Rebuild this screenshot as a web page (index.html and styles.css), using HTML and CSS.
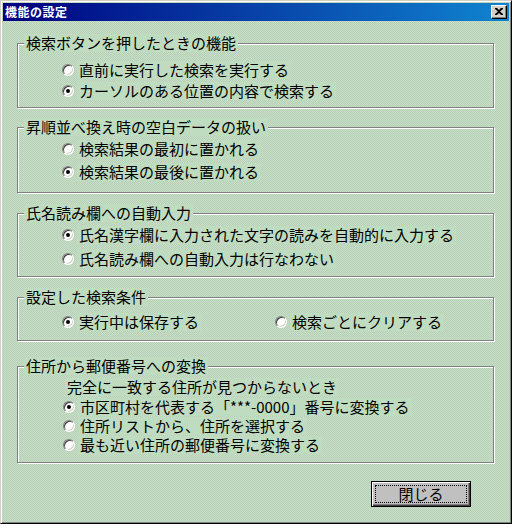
FILE: index.html
```html
<!DOCTYPE html>
<html lang="ja">

<head>
    <meta charset="UTF-8">
    <title>機能の設定</title>
    <link rel="stylesheet" href="styles.css">
</head>

<body>

    <div class="window">
        <div class="titlebar">
            <span class="title">機能の設定</span>
            <span class="close-btn">
                <svg width="8" height="7" viewBox="0 0 8 7"><path d="M0 0h2l2 2 2-2h2v1L5 3.5 8 6v1H6L4 5 2 7H0V6l3-2.5L0 1z" fill="#000"/></svg>
            </span>
        </div>

        <div class="group g1">
            <div class="group-title">検索ボタンを押したときの機能</div>
            <div class="option o1-1"><span class="radio"></span><span class="label">直前に実行した検索を実行する</span></div>
            <div class="option o1-2"><span class="radio checked"></span><span class="label">カーソルのある位置の内容で検索する</span></div>
        </div>

        <div class="group g2">
            <div class="group-title">昇順並べ換え時の空白データの扱い</div>
            <div class="option o2-1"><span class="radio"></span><span class="label">検索結果の最初に置かれる</span></div>
            <div class="option o2-2"><span class="radio checked"></span><span class="label">検索結果の最後に置かれる</span></div>
        </div>

        <div class="group g3">
            <div class="group-title">氏名読み欄への自動入力</div>
            <div class="option o3-1"><span class="radio checked"></span><span class="label">氏名漢字欄に入力された文字の読みを自動的に入力する</span></div>
            <div class="option o3-2"><span class="radio"></span><span class="label">氏名読み欄への自動入力は行なわない</span></div>
        </div>

        <div class="group g4">
            <div class="group-title">設定した検索条件</div>
            <div class="option-row">
                <div class="option"><span class="radio checked"></span><span class="label">実行中は保存する</span></div>
                <div class="option"><span class="radio"></span><span class="label">検索ごとにクリアする</span></div>
            </div>
        </div>

        <div class="group g5">
            <div class="group-title">住所から郵便番号への変換</div>
            <div class="note"><span class="label">完全に一致する住所が見つからないとき</span></div>
            <div class="option o5-1"><span class="radio checked"></span><span class="label">市区町村を代表する「***-0000」番号に変換する</span></div>
            <div class="option o5-2"><span class="radio"></span><span class="label">住所リストから、住所を選択する</span></div>
            <div class="option o5-3"><span class="radio"></span><span class="label">最も近い住所の郵便番号に変換する</span></div>
        </div>

        <div class="actions">
            <div class="button"><span class="focus">閉じる</span></div>
        </div>
    </div>

</body>

</html>
```

FILE: styles.css
```css
* {
    margin: 0;
    padding: 0;
    box-sizing: border-box;
}

body {
    font-family: "Noto Sans CJK JP", "Noto Sans", sans-serif;
    font-size: 15px;
    line-height: 18px;
    color: #000;
}

.window {
    width: 512px;
    height: 524px;
    padding: 2px;
    border: 1px solid;
    border-color: #d4d0c8 #000 #000 #d4d0c8;
    box-shadow: inset 1px 1px 0 #fff, inset -1px -1px 0 #808080;
    background: repeating-conic-gradient(#c6dec6 0 25%, #b8d0b8 0 50%) 0 0 / 2px 2px;
}

.titlebar {
    height: 18px;
    display: flex;
    align-items: center;
    justify-content: space-between;
    padding: 0 2px 0 2px;
    background: linear-gradient(to right, #000080, #1084d0);
}

.title {
    color: #fff;
    font-size: 12px;
    font-weight: bold;
    letter-spacing: 0.5px;
    line-height: 18px;
}

.close-btn {
    width: 16px;
    height: 14px;
    display: flex;
    align-items: center;
    justify-content: center;
    background: #d4d0c8;
    border: 1px solid;
    border-color: #fff #000 #000 #fff;
    box-shadow: inset -1px -1px 0 #808080;
}

.close-btn svg {
    display: block;
    margin: 0 1px 1px 0;
}

/* group boxes */
.group {
    width: 477px;
    margin-left: 14px;
    border: 1px solid #808080;
    box-shadow: inset 1px 1px 0 #fff, 1px 1px 0 #fff;
}

.group-title {
    display: table;
    height: 18px;
    margin: -10px 0 0 6px;
    padding: 0 2px;
    background: #c0dcc0;
}

.label {
    display: inline-block;
    height: 18px;
    line-height: 18px;
    background: #c0dcc0;
    padding: 0 2px;
    white-space: nowrap;
}

.option {
    display: flex;
    align-items: center;
    height: 18px;
    margin-left: 44px;
}

.radio {
    position: relative;
    width: 12px;
    height: 12px;
    flex: none;
    margin-right: 3px;
    border-radius: 50%;
    border: 1px solid;
    border-color: #808080 #fff #fff #808080;
    background: #fff;
    box-shadow: inset 1px 1px 0 #404040, inset -1px -1px 0 #d4d0c8;
}

.radio.checked::after {
    content: "";
    position: absolute;
    left: 3px;
    top: 3px;
    width: 4px;
    height: 4px;
    border-radius: 50%;
    background: #000;
}

.g1 { margin-top: 22px; padding-bottom: 7px; }
.o1-1 { margin-top: 9px; }
.o1-2 { margin-top: 3px; }

.g2 { margin-top: 19px; padding-bottom: 11px; }
.o2-1 { margin-top: 4px; }
.o2-2 { margin-top: 5px; }

.g3 { margin-top: 20px; padding-bottom: 8px; }
.o3-1 { margin-top: 4px; }
.o3-2 { margin-top: 6px; }

.g4 { margin-top: 20px; padding-bottom: 9px; }

.option-row {
    display: grid;
    grid-template-columns: 213px auto;
    margin: 7px 0 0 44px;
}

.option-row .option {
    margin-left: 0;
}

.g5 { margin-top: 25px; padding-bottom: 8px; }

.note {
    height: 18px;
    margin: 3px 0 0 47px;
}

.o5-1 { margin-top: 2px; margin-left: 45px; }
.o5-2 { margin-top: 1px; margin-left: 45px; }
.o5-3 { margin-top: 1px; margin-left: 45px; }

/* bottom button */
.actions {
    display: flex;
    justify-content: flex-end;
    margin: 18px 38px 0 0;
}

.button {
    width: 100px;
    height: 26px;
    padding: 3px;
    background: #c0c0c0;
    border: 1px solid #000;
    box-shadow: inset 1px 1px 0 #fff, inset -1px -1px 0 #404040, inset -2px -2px 0 #808080;
}

.focus {
    display: flex;
    align-items: center;
    justify-content: center;
    height: 100%;
    border: 1px dotted #000;
    font-size: 15px;
}
```
